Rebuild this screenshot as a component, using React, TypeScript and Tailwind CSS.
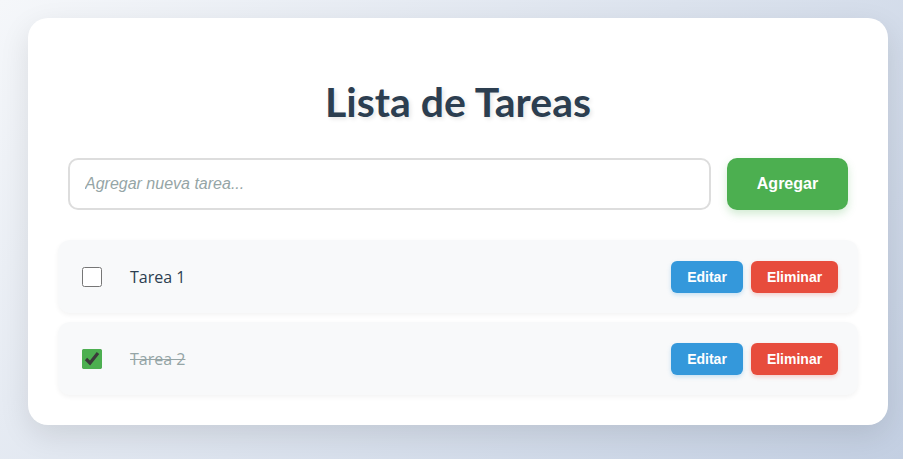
import { useState } from "react";

type Task = { id: number; text: string; done: boolean };

export default function App() {
  const [tasks, setTasks] = useState<Task[]>([
    { id: 1, text: "Tarea 1", done: false },
    { id: 2, text: "Tarea 2", done: true },
  ]);

  const toggle = (id: number) =>
    setTasks(tasks.map((t) => (t.id === id ? { ...t, done: !t.done } : t)));

  return (
    <main className="min-h-screen w-full bg-[linear-gradient(135deg,#f5f7fa_0%,#c3cfe2_100%)] pt-[18px] pb-8 font-['Liberation_Sans',Arial,sans-serif]">
      <div className="ml-[28px] w-[860px] rounded-[20px] bg-white p-[30px] shadow-[0_10px_30px_rgba(0,0,0,0.1)]">
        <h1 className="mt-[27px] mb-[29px] text-center font-['Lato',sans-serif] text-[41px] leading-[54px] font-bold text-[#2c3e50] [text-shadow:2px_2px_4px_rgba(0,0,0,0.1)]">
          Lista de Tareas
        </h1>

        <div className="flex gap-4 px-[10px]">
          <input
            type="text"
            placeholder="Agregar nueva tarea..."
            className="h-[52px] flex-1 rounded-[10px] border-2 border-[#ddd] px-[15px] text-base outline-none placeholder:text-[#95a5a6] placeholder:italic"
          />
          <button className="h-[52px] w-[121px] rounded-[10px] bg-[#4caf50] text-base font-bold text-white shadow-[0_4px_8px_rgba(76,175,80,0.25)]">
            Agregar
          </button>
        </div>

        <ul className="mt-[30px] flex flex-col gap-[9px]">
          {tasks.map((t) => (
            <li
              key={t.id}
              className="flex h-[73px] items-center rounded-[12px] bg-[#f8f9fa] pr-5 pl-6 shadow-[0_2px_5px_rgba(0,0,0,0.05)]"
            >
              <input
                type="checkbox"
                checked={t.done}
                onChange={() => toggle(t.id)}
                className="h-5 w-5 accent-[#4caf50]"
              />
              <span
                className={
                  t.done
                    ? "ml-7 flex-1 font-['Open_Sans',sans-serif] text-base text-[#95a5a6] line-through"
                    : "ml-7 flex-1 font-['Open_Sans',sans-serif] text-base text-[#2c3e50]"
                }
              >
                {t.text}
              </span>
              <div className="flex gap-2">
                <button className="h-8 w-[72px] rounded-[6px] bg-[#3498db] text-sm font-bold text-white shadow-[0_2px_4px_rgba(52,152,219,0.25)]">
                  Editar
                </button>
                <button className="h-8 w-[87px] rounded-[6px] bg-[#e74c3c] text-sm font-bold text-white shadow-[0_2px_4px_rgba(231,76,60,0.25)]">
                  Eliminar
                </button>
              </div>
            </li>
          ))}
        </ul>
      </div>
    </main>
  );
}
